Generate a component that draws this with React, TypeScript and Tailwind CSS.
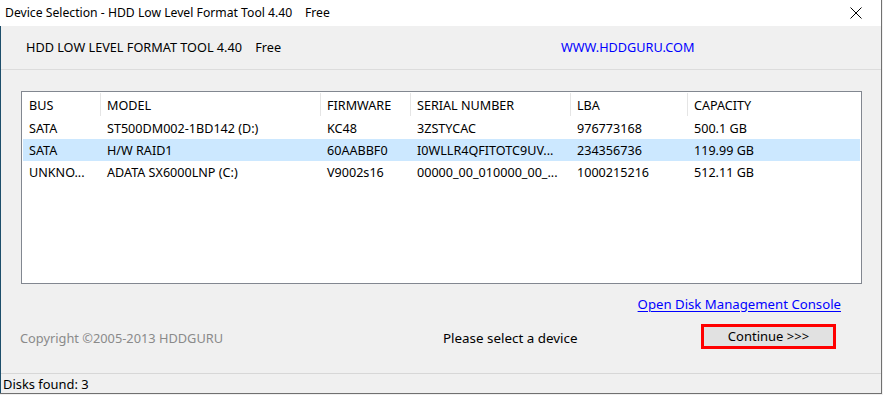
import React from "react";

const cols = [
  { label: "BUS", w: 78 },
  { label: "MODEL", w: 220 },
  { label: "FIRMWARE", w: 90 },
  { label: "SERIAL NUMBER", w: 160 },
  { label: "LBA", w: 117 },
  { label: "CAPACITY", w: 171 },
];

const rows = [
  ["SATA", "ST500DM002-1BD142 (D:)", "KC48", "3ZSTYCAC", "976773168", "500.1 GB"],
  ["SATA", "H/W RAID1", "60AABBF0", "I0WLLR4QFITOTC9UV...", "234356736", "119.99 GB"],
  ["UNKNO...", "ADATA SX6000LNP (C:)", "V9002s16", "00000_00_010000_00_...", "1000215216", "512.11 GB"],
];

export default function App() {
  return (
    <div
      className="w-[883px] h-[395px] overflow-hidden bg-[#f0f0f0] text-[12.5px] text-black"
      style={{ fontFamily: '"Noto Sans", "Open Sans", sans-serif' }}
    >
      <div className="w-[882px] h-[394px] flex flex-col border-r border-b border-[#707070] bg-[#f0f0f0]">
        {/* Title bar */}
        <div className="h-[26px] bg-white flex items-center justify-between shrink-0">
          <span className="pl-[5px] leading-none pt-[1px] text-[12.2px]">
            Device Selection - HDD Low Level Format Tool 4.40&nbsp;&nbsp;&nbsp;&nbsp;Free
          </span>
          <svg width="12" height="12" viewBox="0 0 12 12" className="mr-[19px]">
            <path d="M0.5 0.5 L11.5 11.5 M11.5 0.5 L0.5 11.5" stroke="#000" strokeWidth="1" />
          </svg>
        </div>

        {/* Client area */}
        <div className="flex-1 flex flex-col border-l border-[#1d4e6b]">
          <div className="h-[43px] flex items-center shrink-0 pt-[1px] text-[12.7px]">
            <span className="ml-[25px] w-[535px]">HDD LOW LEVEL FORMAT TOOL 4.40&nbsp;&nbsp;&nbsp;&nbsp;Free</span>
            <span className="text-[#0000ff]">WWW.HDDGURU.COM</span>
          </div>
          <div className="h-px bg-[#dcdcdc] shrink-0" />

          {/* List view */}
          <div className="mt-[21px] ml-[20px] w-[841px] h-[193px] border border-[#828790] bg-white shrink-0 pl-px text-[12.6px]">
            <div className="flex h-[25px] items-center">
              {cols.map((c, i) => (
                <div
                  key={c.label}
                  className={`h-[23px] flex items-center pl-[6px] pt-[3px] ${i < cols.length - 1 ? "border-r border-[#e5e5e5]" : ""}`}
                  style={{ width: c.w }}
                >
                  {c.label}
                </div>
              ))}
            </div>
            {rows.map((r, ri) => (
              <div key={ri} className={`flex h-[22px] items-center w-[837px] pt-[2px] ${ri === 1 ? "bg-[#cce8ff]" : ""}`}>
                {r.map((cell, ci) => (
                  <div key={ci} className="pl-[6px] whitespace-nowrap" style={{ width: cols[ci].w }}>
                    {cell}
                  </div>
                ))}
              </div>
            ))}
          </div>

          <div className="h-[38px] flex items-center justify-end shrink-0 pr-[40px] pt-[3px] text-[13.2px]">
            <span className="text-[#0000ff] underline underline-offset-2">Open Disk Management Console</span>
          </div>

          <div className="h-[28px] flex items-center shrink-0">
            <span className="ml-[19px] w-[423px] text-[#8a8a8a] mt-[6px] text-[12.8px]">Copyright ©2005-2013 HDDGURU</span>
            <span className="w-[258px] mt-[5px] text-[13.4px]">Please select a device</span>
            <div className="w-[135px] h-[25px] border-[3px] border-[#ff0000] bg-[#e1e1e1] flex items-center justify-center pt-[1px] text-[13px]">
              Continue &gt;&gt;&gt;
            </div>
          </div>

          <div className="flex-1" />
          <div className="h-px bg-[#d7d7d7] shrink-0" />
          <div className="h-[19px] flex items-center pl-[2px] shrink-0 pt-[2px] text-[12.9px]">Disks found: 3</div>
        </div>
      </div>
    </div>
  );
}
